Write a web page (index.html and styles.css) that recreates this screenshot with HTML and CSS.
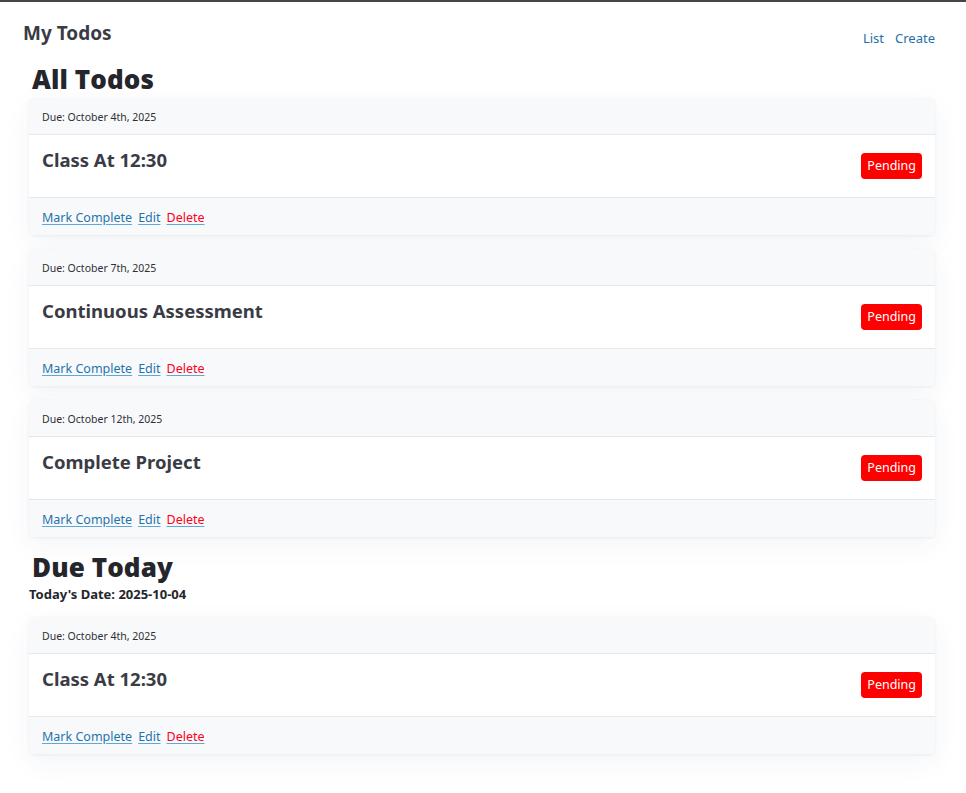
FILE: index.html
```html
<!DOCTYPE html>
<html lang="en">
<head>
<meta charset="utf-8">
<title>My Todos</title>
<link rel="stylesheet" href="styles.css">
</head>
<body>
<header class="topbar">
  <div class="brand">My Todos</div>
  <nav class="nav">
    <a href="#">List</a>
    <a href="#">Create</a>
  </nav>
</header>
<main class="content">
  <h1 class="section-title">All Todos</h1>
  <div class="cards">
    <article class="card">
      <div class="card-head">Due: October 4th, 2025</div>
      <div class="card-body">
        <h2 class="todo-title">Class At 12:30</h2>
        <span class="badge">Pending</span>
      </div>
      <div class="card-foot">
        <a href="#" class="link">Mark Complete</a>
        <a href="#" class="link">Edit</a>
        <a href="#" class="link danger">Delete</a>
      </div>
    </article>
    <article class="card">
      <div class="card-head">Due: October 7th, 2025</div>
      <div class="card-body">
        <h2 class="todo-title">Continuous Assessment</h2>
        <span class="badge">Pending</span>
      </div>
      <div class="card-foot">
        <a href="#" class="link">Mark Complete</a>
        <a href="#" class="link">Edit</a>
        <a href="#" class="link danger">Delete</a>
      </div>
    </article>
    <article class="card">
      <div class="card-head">Due: October 12th, 2025</div>
      <div class="card-body">
        <h2 class="todo-title">Complete Project</h2>
        <span class="badge">Pending</span>
      </div>
      <div class="card-foot">
        <a href="#" class="link">Mark Complete</a>
        <a href="#" class="link">Edit</a>
        <a href="#" class="link danger">Delete</a>
      </div>
    </article>
  </div>
  <h1 class="section-title due">Due Today</h1>
  <p class="today">Today's Date: 2025-10-04</p>
  <div class="cards">
    <article class="card">
      <div class="card-head">Due: October 4th, 2025</div>
      <div class="card-body">
        <h2 class="todo-title">Class At 12:30</h2>
        <span class="badge">Pending</span>
      </div>
      <div class="card-foot">
        <a href="#" class="link">Mark Complete</a>
        <a href="#" class="link">Edit</a>
        <a href="#" class="link danger">Delete</a>
      </div>
    </article>
  </div>
</main>
</body>
</html>
```

FILE: styles.css
```css
* { box-sizing: border-box; }

html, body {
  margin: 0;
  padding: 0;
  background: #ffffff;
}

body {
  font-family: "Noto Sans", "Open Sans", sans-serif;
  color: #212529;
  border-top: 2px solid #454545;
  min-height: 793px;
}

.topbar {
  display: flex;
  justify-content: space-between;
  align-items: flex-start;
  padding: 18px 31px 0 23px;
}

.brand {
  font-size: 19px;
  font-weight: 700;
  color: #3a3b45;
  line-height: 26px;
}

.nav {
  display: flex;
  gap: 11px;
  padding-top: 10px;
}

.nav a {
  font-size: 13px;
  color: #1f6fa8;
  text-decoration: none;
  line-height: 16px;
}

.content {
  padding: 0 31px 0 29px;
}

.section-title {
  margin: 18px 0 4px;
  padding-left: 3px;
  font-family: "Open Sans", "Noto Sans", sans-serif;
  font-weight: 800;
  font-size: 26px;
  line-height: 30px;
  color: #25262c;
  letter-spacing: 0.1px;
}

.section-title.due {
  margin-top: 15px;
  margin-bottom: 0;
}

.today {
  margin: 4px 0 15px;
  font-size: 13px;
  font-weight: 700;
  line-height: 16px;
  color: #25262c;
}

.cards {
  display: flex;
  flex-direction: column;
  gap: 14px;
}

.card {
  background: #ffffff;
  border-radius: 4px;
  box-shadow: 0 1px 3px rgba(0, 0, 0, 0.06), 0 8px 28px rgba(40, 50, 110, 0.05);
  overflow: hidden;
}

.card-head {
  background: #f8f9fa;
  border-bottom: 1px solid #e4e7ee;
  height: 37px;
  padding: 2px 13px 0;
  display: flex;
  align-items: center;
  font-size: 10.5px;
  color: #2f3036;
}

.card-body {
  display: flex;
  justify-content: space-between;
  align-items: center;
  height: 63px;
  padding: 0 13px;
  border-bottom: 1px solid #e4e7ee;
}

.todo-title {
  margin: 0 0 12px;
  font-size: 18.5px;
  font-weight: 700;
  line-height: 24px;
  color: #3a3b45;
}

.badge {
  background: #ff0000;
  color: #ffffff;
  font-size: 12.5px;
  line-height: 16px;
  padding: 5px 6px;
  border-radius: 4px;
}

.card-foot {
  background: #f8f9fa;
  height: 37px;
  padding: 1px 13px 0;
  display: flex;
  align-items: center;
  gap: 6px;
}

.link {
  font-size: 12.5px;
  color: #1f74ad;
  text-decoration: underline;
  text-decoration-color: #5aa9d9;
  text-underline-offset: 2px;
}

.link.danger {
  color: #ff0022;
}
```
